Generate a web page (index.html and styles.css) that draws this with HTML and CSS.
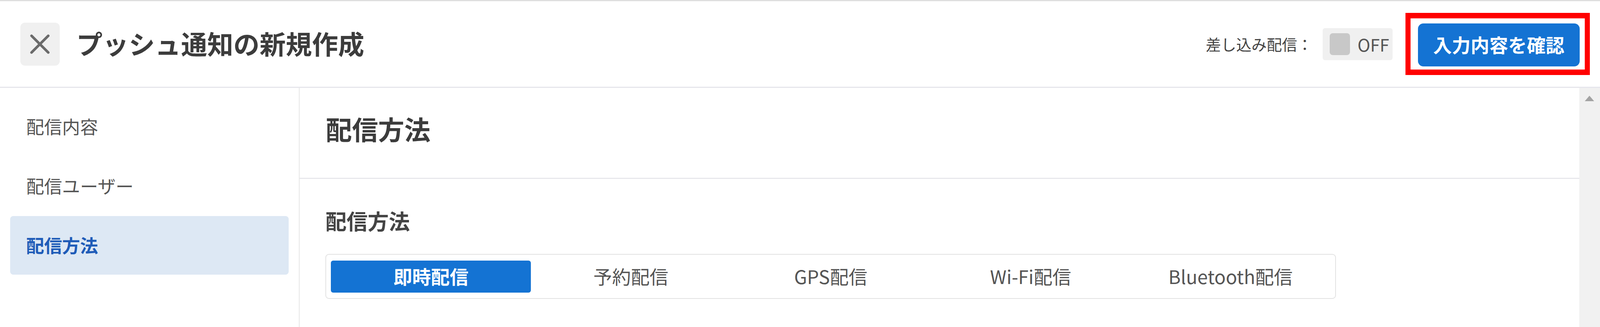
FILE: index.html
```html
<!DOCTYPE html>
<html lang="ja">
<head>
<meta charset="utf-8">
<title>プッシュ通知の新規作成</title>
<link rel="stylesheet" href="styles.css">
</head>
<body>
<div class="page">
  <header class="topbar">
    <button class="close-btn" type="button" aria-label="閉じる">
      <svg class="close-icon" viewBox="0 0 54 54" width="54" height="54">
        <line x1="4" y1="4" x2="50" y2="50"/>
        <line x1="50" y1="4" x2="4" y2="50"/>
      </svg>
    </button>
    <h1 class="title">プッシュ通知の新規作成</h1>
    <div class="topbar-right">
      <span class="merge-label">差し込み配信：</span>
      <div class="toggle">
        <span class="toggle-knob"></span>
        <span class="toggle-text">OFF</span>
      </div>
      <div class="highlight">
        <button class="confirm-btn" type="button">入力内容を確認</button>
      </div>
    </div>
  </header>
  <div class="body">
    <nav class="sidebar">
      <a class="nav-item">配信内容</a>
      <a class="nav-item">配信ユーザー</a>
      <a class="nav-item is-active">配信方法</a>
    </nav>
    <main class="content">
      <section class="content-head">
        <h2 class="content-title">配信方法</h2>
      </section>
      <section class="content-section">
        <h3 class="section-title">配信方法</h3>
        <div class="tabs">
          <div class="tab is-active">即時配信</div>
          <div class="tab">予約配信</div>
          <div class="tab">GPS配信</div>
          <div class="tab">Wi-Fi配信</div>
          <div class="tab">Bluetooth配信</div>
        </div>
      </section>
    </main>
    <div class="scrollbar">
      <span class="scroll-arrow"></span>
    </div>
  </div>
</div>
</body>
</html>
```
FILE: styles.css
```css
* { box-sizing: border-box; }

:root {
  /* horizontal unit: the design is drawn on a 4400px-wide canvas */
  --u: calc(100vw / 4400);
}

html, body {
  margin: 0;
  padding: 0;
  background: #ffffff;
}

body {
  font-family: "Noto Sans CJK JP", "Noto Sans", sans-serif;
  color: #444444;
}

.page {
  height: 837px;
  display: flex;
  flex-direction: column;
  border-top: 3px solid #dedede;
  overflow: hidden;
}

/* ---------- top bar ---------- */
.topbar {
  height: 222px;
  flex: 0 0 auto;
  display: flex;
  align-items: center;
  padding: 0 calc(28 * var(--u)) 0 calc(56 * var(--u));
  border-bottom: 3px solid #e6e6ec;
}

.close-btn {
  width: calc(108 * var(--u));
  height: 110px;
  border: 0;
  border-radius: 12px;
  background: #f0f0f0;
  padding: 0;
  display: flex;
  align-items: center;
  justify-content: center;
  flex: 0 0 auto;
}

.close-icon {
  width: calc(54 * var(--u));
  height: 54px;
}

.close-icon line {
  stroke: #6b6b6b;
  stroke-width: 7;
  stroke-linecap: round;
}

.title {
  margin: 0 0 0 calc(46 * var(--u));
  font-size: 67px;
  line-height: 1;
  font-weight: 700;
  color: #3c3c3c;
  padding-bottom: 6px;
  white-space: nowrap;
}

.topbar-right {
  margin-left: auto;
  display: flex;
  align-items: center;
}

.merge-label {
  font-size: 39px;
  line-height: 1;
  color: #444444;
  white-space: nowrap;
}

.toggle {
  margin-left: calc(28 * var(--u));
  width: calc(192 * var(--u));
  height: 82px;
  background: #f0f0f0;
  border-radius: 6px;
  display: flex;
  align-items: center;
  padding-left: calc(20 * var(--u));
}

.toggle-knob {
  width: calc(55 * var(--u));
  height: 56px;
  border-radius: 8px;
  background: #c8c8c8;
  flex: 0 0 auto;
}

.toggle-text {
  margin-left: calc(21 * var(--u));
  font-size: 44px;
  line-height: 1;
  color: #555555;
}

.highlight {
  margin-left: calc(36 * var(--u));
  border-style: solid;
  border-color: #ff0000;
  border-width: 14px calc(14 * var(--u));
  padding: 13px calc(14 * var(--u)) 8px calc(20 * var(--u));
  background: #ffffff;
}

.confirm-btn {
  display: block;
  width: calc(445 * var(--u));
  height: 110px;
  border: 0;
  border-radius: 14px;
  background: #1473d3;
  color: #ffffff;
  font-family: "Noto Sans CJK JP", "Noto Sans", sans-serif;
  font-size: 48px;
  font-weight: 700;
  line-height: 1;
  padding: 0 0 4px;
  white-space: nowrap;
}

/* ---------- body ---------- */
.body {
  flex: 1 1 auto;
  display: flex;
  min-height: 0;
}

.sidebar {
  width: calc(824 * var(--u));
  flex: 0 0 auto;
  border-right: 2px solid #e6e6e6;
  padding: 24px calc(28 * var(--u)) 0 calc(28 * var(--u));
  display: flex;
  flex-direction: column;
  gap: 2px;
}

.nav-item {
  height: 150px;
  display: flex;
  align-items: center;
  padding: 0 0 4px calc(44 * var(--u));
  font-size: 46px;
  line-height: 1;
  color: #555555;
  border-radius: 8px;
  white-space: nowrap;
}

.nav-item.is-active {
  background: #dde8f4;
  color: #1f5cb8;
  font-weight: 700;
}

.content {
  flex: 1 1 auto;
  min-width: 0;
}

.content-head {
  height: 233px;
  border-bottom: 3px solid #e8e8ec;
  display: flex;
  align-items: center;
  padding: 0 0 24px calc(72 * var(--u));
}

.content-title {
  margin: 0;
  font-size: 67px;
  line-height: 1;
  font-weight: 700;
  color: #3c3c3c;
}

.content-section {
  padding: 80px 0 0 calc(71 * var(--u));
}

.section-title {
  margin: 0;
  font-size: 54px;
  line-height: 1;
  font-weight: 700;
  color: #444444;
}

.tabs {
  margin-top: 58px;
  width: calc(2779 * var(--u));
  height: 115px;
  border: 2px solid #e2e2e2;
  border-radius: 9px;
  padding: 15px calc(13 * var(--u)) 14px calc(13 * var(--u));
  display: flex;
}

.tab {
  flex: 1 1 0;
  display: flex;
  align-items: center;
  justify-content: center;
  font-size: 48px;
  line-height: 1;
  color: #555555;
  border-radius: 6px;
  padding-bottom: 4px;
  white-space: nowrap;
}

.tab.is-active {
  background: #1473d3;
  color: #ffffff;
  font-weight: 700;
}

.scrollbar {
  width: calc(57 * var(--u));
  flex: 0 0 auto;
  background: #f1f1f1;
  display: flex;
  justify-content: center;
  padding-top: 20px;
}

.scroll-arrow {
  width: 0;
  height: 0;
  border-left: calc(13 * var(--u)) solid transparent;
  border-right: calc(13 * var(--u)) solid transparent;
  border-bottom: 14px solid #a3a3a3;
}
```
